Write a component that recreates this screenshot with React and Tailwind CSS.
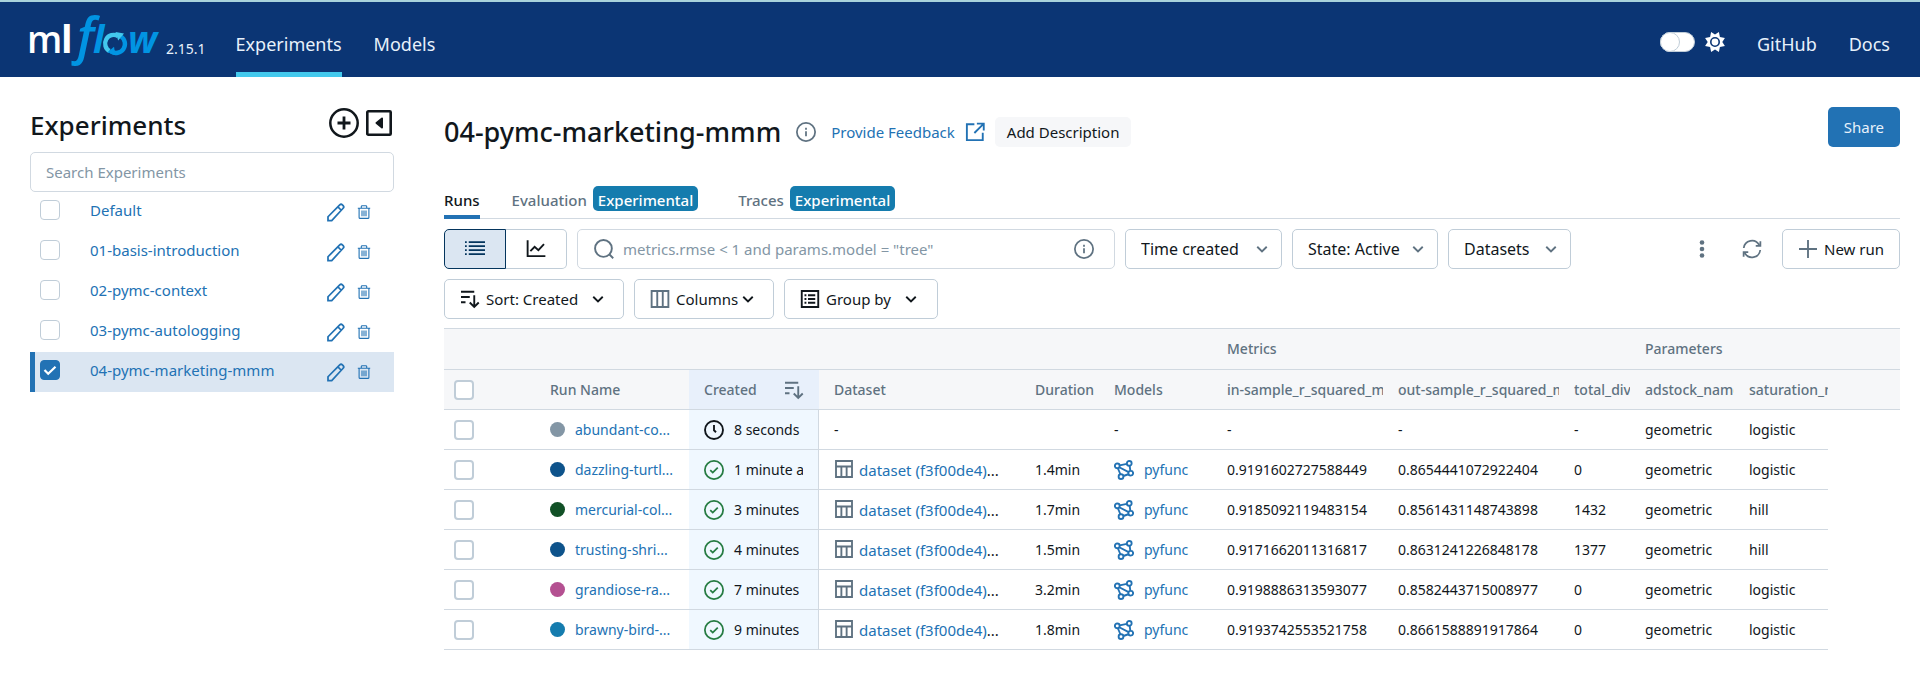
import React from "react";

const experiments = [
  "Default",
  "01-basis-introduction",
  "02-pymc-context",
  "03-pymc-autologging",
  "04-pymc-marketing-mmm",
];

const runs = [
  { name: "abundant-co...", dot: "bg-[#8396a5]", created: "8 seconds ago", running: true, r2in: "-", r2out: "-", div: "-", adstock: "geometric", saturation: "logistic" },
  { name: "dazzling-turtl...", dot: "bg-[#0e538b]", created: "1 minute ago", duration: "1.4min", r2in: "0.9191602727588449", r2out: "0.8654441072922404", div: "0", adstock: "geometric", saturation: "logistic" },
  { name: "mercurial-col...", dot: "bg-[#115026]", created: "3 minutes ago", duration: "1.7min", r2in: "0.9185092119483154", r2out: "0.8561431148743898", div: "1432", adstock: "geometric", saturation: "hill" },
  { name: "trusting-shri...", dot: "bg-[#0e538b]", created: "4 minutes ago", duration: "1.5min", r2in: "0.9171662011316817", r2out: "0.8631241226848178", div: "1377", adstock: "geometric", saturation: "hill" },
  { name: "grandiose-ra...", dot: "bg-[#b45091]", created: "7 minutes ago", duration: "3.2min", r2in: "0.9198886313593077", r2out: "0.8582443715008977", div: "0", adstock: "geometric", saturation: "logistic" },
  { name: "brawny-bird-...", dot: "bg-[#157cae]", created: "9 minutes ago", duration: "1.8min", r2in: "0.9193742553521758", r2out: "0.8661588891917864", div: "0", adstock: "geometric", saturation: "logistic" },
];

function Icon({ className = "size-5", width = 1.5, children }) {
  return (
    <svg className={`shrink-0 ${className}`} viewBox="0 0 16 16" fill="none" stroke="currentColor" strokeWidth={width} aria-hidden="true">
      {children}
    </svg>
  );
}

const ChevronDown = ({ className = "size-5" }) => (
  <Icon className={className}><path d="M4.2 6.2 8 10l3.8-3.8" /></Icon>
);
const InfoIcon = () => (
  <Icon className="size-5" width={1.4}>
    <circle cx="8" cy="8" r="7.3" />
    <path d="M8 7.3v4M8 4.6v1.5" />
  </Icon>
);
const PencilIcon = () => (
  <Icon className="size-5" width={1.4}>
    <path d="M1.6 14.800v-3L11 2.300a1.500 1.500 0 0 1 2.100 0l.6.6a1.500 1.500 0 0 1 0 2.100L4.600 14.800zM9.500 3.900l2.700 2.700" />
  </Icon>
);
const TrashIcon = () => (
  <Icon className="size-4" width={1.1}>
    <path d="M1.8 4.2h12.4M5.3 4V2.6q0-.9.9-.9h3.6q.9 0 .9.9V4M3.1 4.2v9.2q0 1 1 1h7.8q1 0 1-1V4.2M6 6.4v5.8M8 6.4v5.8M10 6.4v5.8" />
  </Icon>
);
const SortIcon = ({ className = "size-5" }) => (
  <Icon className={className} width={1.5}>
    <path d="M.8 2.2h10.6M.8 6.4h7M.8 10.6h3.6M11.4 5v9.3M7.8 10.8l3.6 3.6 3.6-3.6" />
  </Icon>
);
const DatasetIcon = () => (
  <Icon className="size-5" width={1.5}>
    <path d="M1.6 1.6h12.8v12.8H1.6zM1.6 6h12.8M5.9 6v8.4M10.1 6v8.4" />
  </Icon>
);
const ModelIcon = () => (
  <Icon className="size-5" width={1.5}>
    <circle cx="2.600" cy="4.700" r="1.900" />
    <circle cx="12.200" cy="2.700" r="1.900" />
    <circle cx="13.400" cy="10.600" r="1.900" />
    <circle cx="5.600" cy="13.300" r="1.900" />
    <path d="m4.500 4.300 5.800-1.200M12.500 4.600l.6 4.100M4.200 5.800l7.500 3.900M3.100 6.600l2 4.800M7.500 12.800l4-1.400" />
  </Icon>
);
const CheckCircle = () => (
  <Icon className="size-5 text-[#277c43]" width={1.4}>
    <circle cx="8" cy="8" r="7.3" />
    <path d="m5 8.1 2 2 4-4" />
  </Icon>
);
const ClockIcon = () => (
  <Icon className="size-5 text-[#11171c]" width={1.5}>
    <circle cx="8" cy="8" r="7.2" />
    <path d="M8 4v4.2l1.6 1.6" />
  </Icon>
);

function Logo() {
  return (
    <svg className="h-[62px] w-[140px] shrink-0" viewBox="-4 -8 140 62" role="img" aria-label="mlflow" fontFamily="'Open Sans', sans-serif">
      <text x="-3" y="40" fontSize="37" fontWeight="600" fill="#fff">m</text>
      <text x="31" y="40" fontSize="38" fontWeight="700" fill="#fff">l</text>
      <g fill="#0194e2" fontStyle="italic">
        <text x="47" y="41" fontSize="50" fontWeight="600">f</text>
        <text x="63" y="40" fontSize="38" fontWeight="700">l</text>
        <text x="98" y="40" fontSize="37" fontWeight="700">w</text>
      </g>
      <g fill="none" strokeWidth="4.400">
        <path d="M79.500 38A8.200 8.200 0 0 1 88 23" stroke="#43c9ed" />
        <path d="M91 23.500A8.200 8.200 0 0 1 81 38.400" stroke="#0194e2" />
      </g>
      <path d="M85.500 19l8.500 1.500-5.800 7z" fill="#43c9ed" />
      <path d="M85.500 42.300l-8-3 6.500-5.500z" fill="#0194e2" />
    </svg>
  );
}

const box =
  "size-5 shrink-0 appearance-none rounded border-[#c0cdd8] bg-white checked:border-[#2272b4] checked:bg-[#2272b4]";

const outline =
  "flex h-10 shrink-0 items-center rounded-[5px] border border-[#c0cdd8] bg-white text-[15px]";

function FilterSelect({ label, className }) {
  return (
    <div className={`relative h-10 shrink-0 ${className}`}>
      <select aria-label={label} className="h-10 w-full appearance-none rounded-[5px] border border-[#c0cdd8] bg-white pr-9 pl-[15px] text-base">
        <option>{label}</option>
      </select>
      <span className="pointer-events-none absolute inset-y-0 right-2.5 flex items-center text-[#5f7281]">
        <ChevronDown className="size-5" />
      </span>
    </div>
  );
}

function Header() {
  return (
    <header className="flex h-[77px] items-stretch border-t-2 border-[#a9d3dc] bg-[#0b3574] pr-[30px] pl-[26px] text-lg text-[#e7f1fb]">
      <div className="flex items-start pt-[3px]">
        <Logo />
        <span className="mt-[34px] text-sm">2.15.1</span>
      </div>
      <nav className="ml-[30px] flex gap-8">
        <a href="#experiments" className="border-b-[5px] border-[#43c9ed] pt-7 leading-7">Experiments</a>
        <a href="#models" className="pt-7 leading-7">Models</a>
      </nav>
      <div className="ml-auto flex pt-7 leading-7">
        <button type="button" role="switch" aria-checked="false" aria-label="Dark mode" className="mt-0.5 flex h-5 w-[35px] rounded-full border border-[#c0cdd8] bg-white">
          <span className="-mt-px -ml-px size-5 rounded-full border border-[#c0cdd8] bg-white" />
        </button>
        <svg className="mt-0.5 ml-2.5 size-5" viewBox="0 0 20 20" aria-hidden="true">
          <path d="M10 2.6 13.9 0l1 4.9 5 1-2.6 4.1 2.6 4.1-5 1-1 4.9L10 17.4 6.100 20l-1-4.900-5-1L2.700 10 .1 5.900l5-1L6.100 0z" fill="#fff" />
          <circle cx="10" cy="10" r="4.200" fill="#fff" stroke="#0b3574" strokeWidth="1.600" />
        </svg>
        <a href="#github" className="ml-8">GitHub</a>
        <a href="#docs" className="ml-8">Docs</a>
      </div>
    </header>
  );
}

function Sidebar() {
  return (
    <aside className="w-[364px] shrink-0">
      <div className="flex h-[75px] items-start pt-[31px]">
        <h2 className="mt-px text-[26px] leading-8 font-medium">Experiments</h2>
        <button type="button" aria-label="Create experiment" className="ml-auto">
          <svg className="size-[30px]" viewBox="0 0 30 30" fill="none" stroke="currentColor" aria-hidden="true">
            <circle cx="15" cy="15" r="13.700" strokeWidth="2.500" />
            <path d="M15 8.500v13M8.500 15h13" strokeWidth="2.800" />
          </svg>
        </button>
        <button type="button" aria-label="Hide experiment list" className="mr-0.5 ml-[7px] pt-0.5">
          <svg className="size-[26px]" viewBox="0 0 26 26" aria-hidden="true">
            <rect x="1.300" y="1.300" width="23.400" height="23.400" rx="1" fill="none" stroke="currentColor" strokeWidth="2.600" />
            <path d="M10.500 13 16 8.500v9z" fill="currentColor" stroke="currentColor" strokeWidth="2" strokeLinejoin="round" />
          </svg>
        </button>
      </div>
      <input type="text" aria-label="Search Experiments" placeholder="Search Experiments" className="block h-10 w-full rounded-[5px] border border-[#d1d9e1] pl-[15px] text-[15px] placeholder:text-[#8396a5]" />
      <ul>
        {experiments.map((name, i) => {
          const active = i === experiments.length - 1;
          return (
            <li key={name} className={`flex h-10 items-start border-l-[5px] pt-2 pr-[22px] pl-[5px] text-[#2272b4] ${active ? "border-[#2272b4] bg-[#dbe6f2]" : "border-transparent"}`}>
              <span className="relative flex">
                <input type="checkbox" aria-label={`Select ${name}`} defaultChecked={active} className={`${box} border`} />
                {active && (
                  <svg className="pointer-events-none absolute inset-0 size-5" viewBox="0 0 20 20" fill="none" stroke="#fff" strokeWidth="2.200" aria-hidden="true">
                    <path d="m4.500 10 3.700 3.700L15.500 6.800" />
                  </svg>
                )}
              </span>
              <a href="#experiment" className="ml-[30px] text-[15px] leading-5">{name}</a>
              <span className="ml-auto flex gap-2.5 pt-0.5">
                <button type="button" aria-label={`Rename ${name}`}><PencilIcon /></button>
                <button type="button" aria-label={`Delete ${name}`}><TrashIcon /></button>
              </span>
            </li>
          );
        })}
      </ul>
    </aside>
  );
}

function Tabs() {
  const badge = "flex h-[25px] items-center rounded-[5px] bg-[#157cae] px-[5px] pt-0.5 text-white";
  return (
    <div role="tablist" className="mt-[39px] flex h-[33px] items-start border-b border-[#d1d9e1] text-[15px] leading-5 font-medium text-[#5f7281]">
      <button type="button" role="tab" aria-selected="true" className="h-[33px] border-b-4 border-[#2272b4] pb-px text-[#11171c]">Runs</button>
      <button type="button" role="tab" aria-selected="false" className="ml-8 flex items-center gap-1.5">
        <span className="pt-0.5">Evaluation</span><span className={badge}>Experimental</span>
      </button>
      <button type="button" role="tab" aria-selected="false" className="ml-10 flex items-center gap-1.5">
        <span className="pt-0.5">Traces</span><span className={badge}>Experimental</span>
      </button>
    </div>
  );
}

function Toolbar() {
  return (
    <>
      <div className="mt-2.5 flex">
        <div className="flex h-10 shrink-0">
          <button type="button" aria-label="Table view" aria-pressed="true" className="flex w-[62px] items-center justify-center rounded-l-[5px] border border-[#04355d] bg-[#dbe6f2] text-[#04355d]">
            <Icon width={1.4}>
              <path d="M3 2.400h13M3 5.600h13M3 8.800h13M3 12h13M0 2.400h1.400M0 5.600h1.400M0 8.800h1.400M0 12h1.400" />
            </Icon>
          </button>
          <button type="button" aria-label="Chart view" className="flex w-[61px] items-center justify-center rounded-r-[5px] border border-l-0 border-[#c0cdd8]">
            <Icon><path d="M1.300 1v12.700H15.500M3.500 9.700l3.400-3.500 3 2.700 4.500-4.800" /></Icon>
          </button>
        </div>
        <div className="ml-2.5 flex h-10 grow items-center rounded-[5px] border border-[#d1d9e1] pr-5 pl-[15px] text-[#5f7281]">
          <Icon className="size-[22px]" width={1.4}>
            <circle cx="7.600" cy="7.600" r="6.100" />
            <path d="m12 12 2.700 2.700" />
          </Icon>
          <input type="text" aria-label="Search runs" placeholder={'metrics.rmse < 1 and params.model = "tree"'} className="ml-2 min-w-0 grow text-[15px] placeholder:text-[#8396a5]" />
          <button type="button" aria-label="Search help"><InfoIcon /></button>
        </div>
        <FilterSelect label="Time created" className="ml-2.5 w-[157px]" />
        <FilterSelect label="State: Active" className="ml-2.5 w-[146px]" />
        <FilterSelect label="Datasets" className="ml-2.5 w-[123px]" />
        <div className="ml-[121px] flex items-center text-[#5f7281]">
          <button type="button" aria-label="More options">
            <svg className="size-5" viewBox="0 0 20 20" fill="currentColor" aria-hidden="true">
              <circle cx="10" cy="3.500" r="2.300" /><circle cx="10" cy="10" r="2.300" /><circle cx="10" cy="16.500" r="2.300" />
            </svg>
          </button>
          <button type="button" aria-label="Refresh" className="ml-[30px]">
            <Icon width={1.400}>
              <path d="M1.400 7.200A6.600 6.600 0 0 1 13.700 4.700M14.600 8.800A6.600 6.600 0 0 1 2.300 11.300M14.700 1.800v3.700H11M1.300 14.200v-3.700H5" />
            </Icon>
          </button>
          <button type="button" className={`${outline} ml-5 px-[15px] text-[#11171c]`}>
            <Icon className="size-5 text-[#5f7281]" width={1.500}><path d="M8 .8v14.400M.8 8h14.400" /></Icon>
            <span className="ml-1.5">New run</span>
          </button>
        </div>
      </div>
      <div className="mt-2.5 flex gap-2.5">
        <button type="button" className={`${outline} w-[180px] pl-[15px]`}>
          <SortIcon /><span className="ml-1.5">Sort: Created</span><ChevronDown className="ml-2.5 size-5" />
        </button>
        <button type="button" className={`${outline} w-[140px] pl-[15px]`}>
          <Icon className="size-5 text-[#5f7281]" width={1.500}><path d="M1.300 1.600h13.400v12.800H1.300zM5.800 1.600v12.800M10.200 1.600v12.800" /></Icon>
          <span className="ml-1.5">Columns</span><ChevronDown />
        </button>
        <button type="button" className={`${outline} w-[154px] pl-[15px]`}>
          <Icon><path d="M1.400 1.600h13.200v12.800H1.400zM6.400 5h5.800M6.400 8h5.800M6.400 11h5.800M3.600 5h1.500M3.600 8h1.500M3.600 11h1.500" /></Icon>
          <span className="ml-1.5">Group by</span><ChevronDown className="ml-2.5 size-5" />
        </button>
      </div>
    </>
  );
}

const line = "h-10 border-b border-[#d1d9e1]";
const th = `${line} p-0 pl-[15px] text-left font-medium`;
const td = `${line} p-0 pl-[15px] whitespace-nowrap`;

function Heading({ children, span }) {
  return (
    <th colSpan={span} className={th}>
      <div className="overflow-hidden whitespace-nowrap">{children}</div>
    </th>
  );
}

function RunsTable() {
  return (
    <table className="mt-[9px] w-full table-fixed border-separate border-spacing-0 border-t border-[#d1d9e1] text-sm">
      <colgroup>
        <col className="w-[91px]" />
        <col className="w-[154px]" />
        <col className="w-[130px]" />
        <col className="w-[201px]" />
        <col className="w-[79px]" />
        <col className="w-[113px]" />
        <col className="w-[171px]" />
        <col className="w-[176px]" />
        <col className="w-[71px]" />
        <col className="w-[104px]" />
        <col className="w-[94px]" />
        <col />
      </colgroup>
      <thead className="bg-[#f6f7f9] text-[#5f7281]">
        <tr className="h-[41px]">
          <td colSpan={6} className={line} />
          <Heading span={3}>Metrics</Heading>
          <Heading span={3}>Parameters</Heading>
        </tr>
        <tr>
          <th className={`${line} p-0 pl-2.5`}><input type="checkbox" aria-label="Select all runs" className={`${box} block border-2`} /></th>
          <Heading>Run Name</Heading>
          <th className={`${line} bg-[#e8f0fb] p-0 px-[15px] text-left font-medium`}>
            <span className="flex items-center justify-between">Created<SortIcon /></span>
          </th>
          <Heading>Dataset</Heading>
          <Heading>Duration</Heading>
          <Heading>Models</Heading>
          <Heading>in-sample_r_squared_mean</Heading>
          <Heading>out-sample_r_squared_mean</Heading>
          <Heading>total_divergences</Heading>
          <Heading>adstock_name</Heading>
          <Heading>saturation_name</Heading>
          <td className={line} />
        </tr>
      </thead>
      <tbody>
        {runs.map((r) => (
          <tr key={r.name}>
            <td className={`${line} p-0 pl-2.5`}><input type="checkbox" aria-label={`Select ${r.name}`} className={`${box} block border-2`} /></td>
            <td className={td}>
              <a href="#run" className="flex items-center gap-2.5 text-[#2272b4]">
                <span className={`size-[15px] shrink-0 rounded-full ${r.dot}`} />
                {r.name}
              </a>
            </td>
            <td className={`${line} border-r bg-[#f0f8ff] p-0 px-[15px] whitespace-nowrap`}>
              <span className="flex items-center gap-2.5 overflow-hidden">
                {r.running ? <ClockIcon /> : <CheckCircle />}
                {r.created}
              </span>
            </td>
            <td className={td}>
              {r.running ? "-" : (
                <span className="flex items-center text-[15px] text-[#2272b4]">
                  <span className="text-[#5f7281]"><DatasetIcon /></span>
                  <span className="ml-[5px] pt-0.5">
                    <a href="#dataset">dataset (f3f00de4)</a>
                    <span className="text-[#11171c]">...</span>
                  </span>
                </span>
              )}
            </td>
            <td className={td}>{r.duration}</td>
            <td className={td}>
              {r.running ? "-" : (
                <a href="#model" className="flex items-center gap-2.5 text-[#2272b4]"><ModelIcon />pyfunc</a>
              )}
            </td>
            <td className={td}>{r.r2in}</td>
            <td className={td}>{r.r2out}</td>
            <td className={td}>{r.div}</td>
            <td className={td}>{r.adstock}</td>
            <td className={td}>{r.saturation}</td>
            <td />
          </tr>
        ))}
      </tbody>
    </table>
  );
}

export default function App() {
  return (
    <div className="min-h-screen bg-white font-['Noto_Sans','Open_Sans',sans-serif] text-[#11171c]">
      <Header />
      <div className="flex gap-[50px] pr-5 pl-[30px]">
        <Sidebar />
        <main className="min-w-0 grow pt-[30px]">
          <div className="flex h-10 items-center">
            <h1 className="pt-2.5 text-[27px] leading-9 font-medium">04-pymc-marketing-mmm</h1>
            <button type="button" aria-label="Experiment info" className="ml-[15px] pt-2.5 text-[#5f7281]"><InfoIcon /></button>
            <a href="#feedback" className="ml-[15px] flex items-center gap-2.5 pt-2.5 text-[15px] text-[#2272b4]">
              Provide Feedback
              <Icon width={1.500}><path d="M7.500 1.800H1.500v12.700h12.700V8.500M9.500 1.300H15v5.500M15 1.300 7.500 8.800" /></Icon>
            </a>
            <button type="button" className="mt-2.5 ml-2.5 h-[30px] rounded-[5px] bg-[#f6f7f9] px-3 text-[15px]">Add Description</button>
            <button type="button" className="ml-auto h-10 rounded-[5px] bg-[#2272b4] px-4 text-[15px] text-[#e7f1fb]">Share</button>
          </div>
          <Tabs />
          <Toolbar />
          <RunsTable />
        </main>
      </div>
    </div>
  );
}
